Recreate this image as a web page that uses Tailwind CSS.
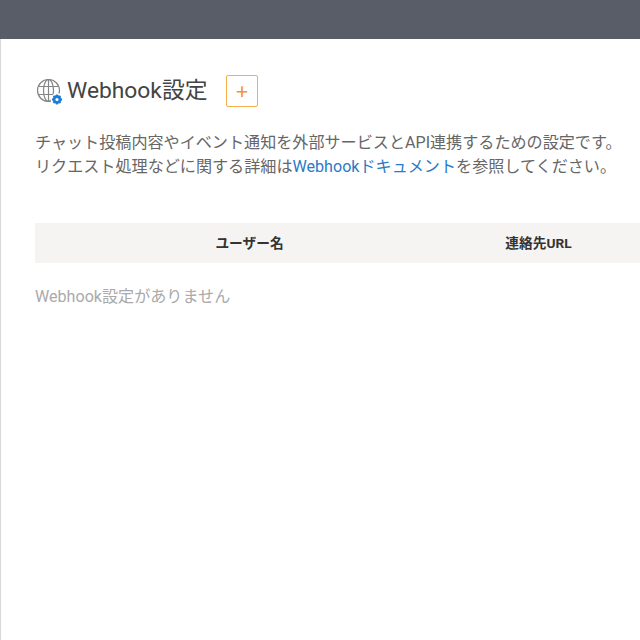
<!DOCTYPE html>
<html lang="ja"><head><meta charset="utf-8"><script src="https://cdn.jsdelivr.net/npm/@tailwindcss/browser@4"></script></head>
<body class="w-[640px] h-[640px] overflow-hidden bg-white font-['Roboto','Noto_Sans_CJK_JP',sans-serif]">
<div class="h-[39px] bg-[#595d68]"></div>
<div class="h-[601px] border-l border-[#d8d8d8] pl-[34px] pt-[36px]">
<div class="flex items-center h-[32px]">
<svg class="w-[27px] h-[27px] ml-[1px] mr-[4px] mt-[3px]" viewBox="0 0 27 27" fill="none" stroke="#858585" stroke-width="1.2"><circle cx="12.5" cy="11.5" r="11"/><ellipse cx="12.5" cy="11.5" rx="5" ry="11"/><path d="M12.5 .5v22M2.5 7.5h20M2.5 15.5h20"/><circle cx="21" cy="20.5" r="6.5" fill="#fff" stroke="none"/><circle cx="21" cy="20.5" r="3" fill="none" stroke="#1c7ed6" stroke-width="2.8"/><path d="M21 15.5v2M21 23.5v2M16 20.5h2M24 20.5h2M17.5 17l1.4 1.4M23.1 22.6l1.4 1.4M17.5 24l1.4-1.4M23.1 18.4l1.4-1.4" stroke="#1c7ed6" stroke-width="1.8"/></svg>
<h1 class="text-[22.8px] text-[#444]">Webhook設定</h1>
<button class="ml-[19px] w-[32px] h-[32px] border border-[#f5b04c] rounded-[2px] text-[#f5922a] text-[22px] font-normal leading-none font-['Noto_Sans'] pb-[2px] pr-[1px]">+</button>
</div>
<p class="mt-[24px] text-[16.1px] leading-[24px] text-[#666] whitespace-nowrap">チャット投稿内容やイベント通知を外部サービスとAPI連携するための設定です。<br>リクエスト処理などに関する詳細は<span class="text-[#2a7ac7]">Webhookドキュメント</span>を参照してください。</p>
<div class="mt-[44px] h-[40px] bg-[#f5f4f2] flex items-center text-[13.7px] font-bold text-[#333]">
<div class="w-[429px] text-center">ユーザー名</div><div class="w-[149px] text-center">連絡先URL</div>
</div>
<p class="mt-[24px] text-[16.1px] leading-[20px] text-[#aaa]">Webhook設定がありません</p>
</div>
</body></html>
